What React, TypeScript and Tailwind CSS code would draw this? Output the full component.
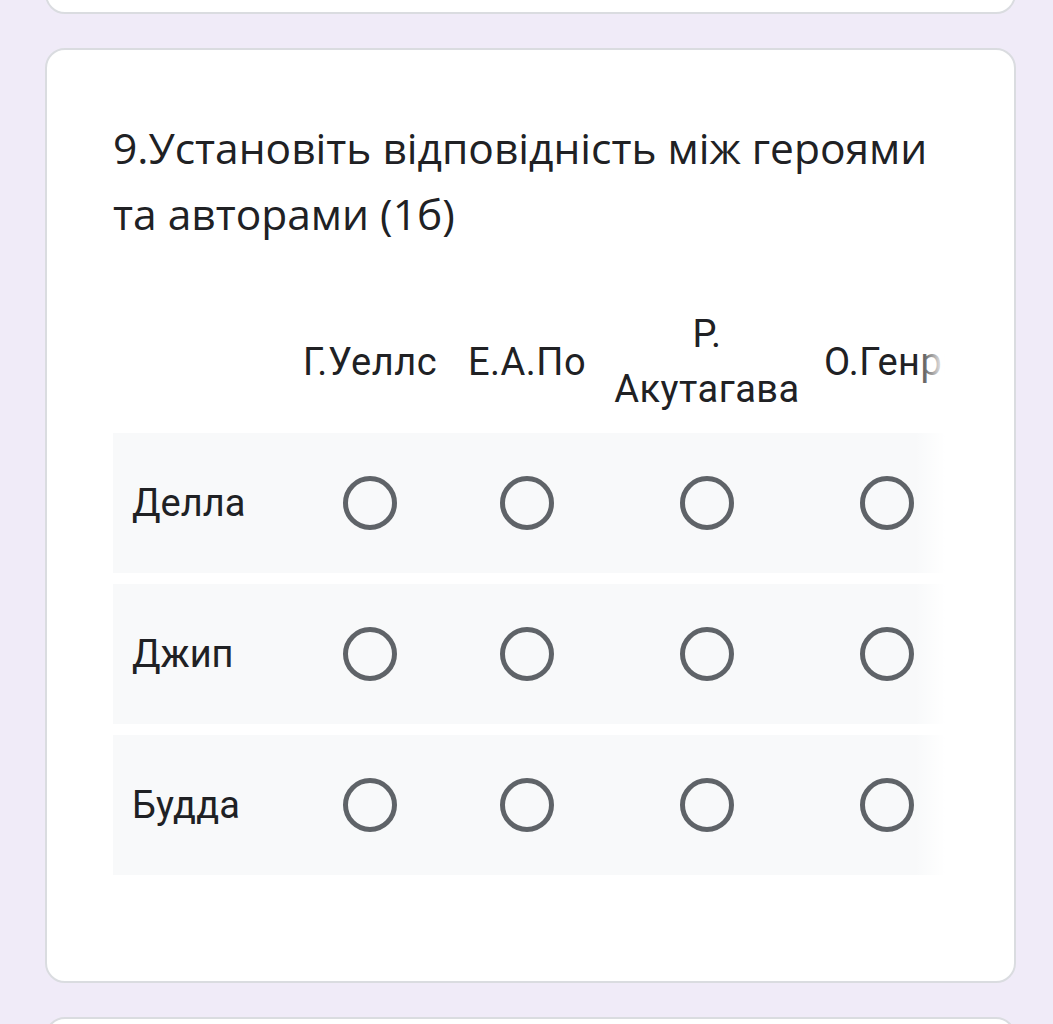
const columns = [
  { label: 'Г.Уеллс', width: 'w-[164px]' },
  { label: 'Е.А.По', width: 'w-[150px]' },
  { label: 'Р. Акутагава', width: 'w-[210px]' },
  { label: 'О.Генри', width: 'w-[150px]' },
]

const rows = ['Делла', 'Джип', 'Будда']

function Radio() {
  return (
    <div className="h-[54px] w-[54px] rounded-full border-[5px] border-[#5f6368]" />
  )
}

export default function App() {
  return (
    <div className="flex h-[1024px] flex-col gap-[34px] overflow-hidden bg-[#f0ebf8] pl-[45px] pr-[37px]">
      <div className="-mt-[80px] h-[94px] shrink-0 rounded-[20px] border-2 border-[#dadce0] bg-white" />

      <div className="shrink-0 rounded-[20px] border-2 border-[#dadce0] bg-white px-[66px] pb-[106px] pt-[65px]">
        <h2 className="font-['Open_Sans',sans-serif] text-[42.5px] leading-[66px] text-[#202124]">
          9.Установіть відповідність між героями та авторами (1б)
        </h2>

        <div className="relative mt-[60px] w-[832px] overflow-hidden font-['Roboto',sans-serif] text-[#202124]">
          <div className="flex w-max items-center">
            <div className="w-[175px] shrink-0" />
            {columns.map((c) => (
              <div
                key={c.label}
                className={`${c.width} shrink-0 px-3 text-center text-[38px] leading-[55px] tracking-[0.5px]`}
              >
                {c.label}
              </div>
            ))}
          </div>

          <div className="mt-[16px] flex flex-col gap-[11px]">
            {rows.map((r) => (
              <div key={r} className="flex h-[140px] w-max items-center bg-[#f8f9fa]">
                <div className="w-[175px] shrink-0 pl-[19px] text-[38px] leading-[55px]">
                  {r}
                </div>
                {columns.map((c) => (
                  <div key={c.label} className={`${c.width} flex shrink-0 justify-center`}>
                    <Radio />
                  </div>
                ))}
              </div>
            ))}
          </div>

          <div className="pointer-events-none absolute inset-y-0 right-0 w-[30px] bg-gradient-to-r from-white/0 to-white" />
        </div>
      </div>

      <div className="h-[94px] shrink-0 rounded-[20px] border-2 border-[#dadce0] bg-white" />
    </div>
  )
}
